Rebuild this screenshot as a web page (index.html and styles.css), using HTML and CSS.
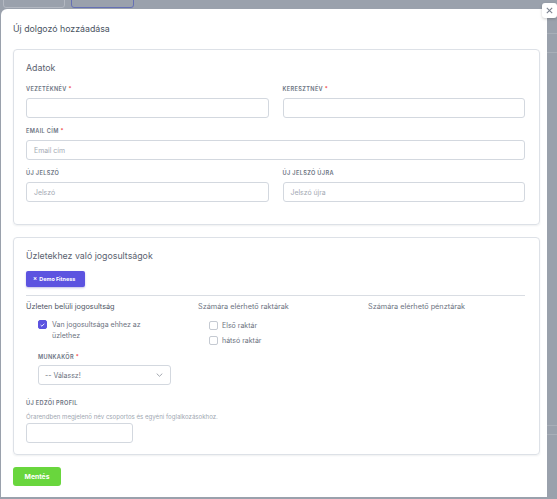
FILE: index.html
```html
<!DOCTYPE html>
<html lang="hu">
<head>
<meta charset="utf-8">
<title>Új dolgozó hozzáadása</title>
<link rel="stylesheet" href="styles.css">
</head>
<body>
<div class="topbar">
  <span class="bg-btn"></span>
  <span class="bg-btn bg-btn-blue"></span>
</div>
<div class="stage">
  <div class="modal">
    <button class="close" aria-label="Bezárás">
      <svg width="7" height="7" viewBox="0 0 7 7"><path d="M0.8 0.8 L6.2 6.2 M6.2 0.8 L0.8 6.2" stroke="#7b8290" stroke-width="1.1" fill="none"/></svg>
    </button>
    <h1 class="modal-title">Új dolgozó hozzáadása</h1>

    <section class="card card-data">
      <h2 class="card-title">Adatok</h2>
      <div class="row two">
        <div class="field">
          <label class="lbl">Vezetéknév <span class="req">*</span></label>
          <div class="input"></div>
        </div>
        <div class="field">
          <label class="lbl">Keresztnév <span class="req">*</span></label>
          <div class="input"></div>
        </div>
      </div>
      <div class="field">
        <label class="lbl">Email cím <span class="req">*</span></label>
        <div class="input"><span class="ph">Email cím</span></div>
      </div>
      <div class="row two">
        <div class="field">
          <label class="lbl">Új jelszó</label>
          <div class="input"><span class="ph">Jelszó</span></div>
        </div>
        <div class="field">
          <label class="lbl">Új jelszó újra</label>
          <div class="input"><span class="ph">Jelszó újra</span></div>
        </div>
      </div>
    </section>

    <section class="card card-perm">
      <h2 class="card-title">Üzletekhez való jogosultságok</h2>
      <div class="tag-row"><span class="tag"><span class="tag-x">×</span> Demo Fitness</span></div>
      <div class="divider"></div>
      <div class="cols">
        <div class="col">
          <div class="col-head dark">Üzleten belüli jogosultság</div>
          <div class="indent">
            <div class="check-row">
              <span class="cb checked">
                <svg width="5" height="4" viewBox="0 0 5 4"><path d="M0.6 2 L1.9 3.2 L4.4 0.7" stroke="#fff" stroke-width="0.9" fill="none"/></svg>
              </span>
              <span class="check-text">Van jogosultsága ehhez az<br>üzlethez</span>
            </div>
            <label class="lbl lbl-job">Munkakör <span class="req">*</span></label>
            <div class="select"><span class="sel-text">-- Válassz!</span>
              <svg width="7" height="4" viewBox="0 0 7 4"><path d="M0.7 0.6 L3.5 3.3 L6.3 0.6" stroke="#8a909b" stroke-width="0.8" fill="none"/></svg>
            </div>
          </div>
        </div>
        <div class="col">
          <div class="col-head">Számára elérhető raktárak</div>
          <div class="indent list">
            <div class="check-row"><span class="cb"></span><span class="check-text">Első raktár</span></div>
            <div class="check-row"><span class="cb"></span><span class="check-text">hátsó raktár</span></div>
          </div>
        </div>
        <div class="col">
          <div class="col-head">Számára elérhető pénztárak</div>
        </div>
      </div>
      <label class="lbl lbl-trainer">Új edzői profil</label>
      <div class="help">Órarendben megjelenő név csoportos és egyéni foglalkozásokhoz.</div>
      <div class="input small"></div>
    </section>

    <button class="save">Mentés</button>
  </div>
  <div class="side">
    <span class="side-line l1"></span>
    <span class="side-line l2"></span>
    <span class="side-line l3"></span>
    <span class="side-line l4"></span>
  </div>
</div>
</body>
</html>
```

FILE: styles.css
```css
* { box-sizing: border-box; }
html, body { margin: 0; padding: 0; }
body {
  width: 557px;
  height: 499px;
  overflow: hidden;
  background: #9aa1ac;
  font-family: Inter, "Noto Sans", "Liberation Sans", sans-serif;
  color: #4b5261;
}
.topbar {
  height: 9px;
  overflow: hidden;
  display: flex;
  gap: 6px;
  padding-left: 3px;
}
.bg-btn {
  display: block;
  width: 62px;
  height: 20px;
  margin-top: -12px;
  border: 1px solid #b3b8c1;
  border-radius: 3px;
}
.bg-btn-blue {
  width: 63px;
  border-color: #6570b4;
}
.stage {
  display: flex;
  height: 490px;
}
.modal {
  position: relative;
  width: 546px;
  margin-left: 1px;
  height: 488px;
  background: #fff;
  border-radius: 6px 0 0 0;
  padding: 13px 8px 0 12px;
}
.side {
  flex: 1;
  display: flex;
  flex-direction: column;
}
.side-line { display: block; height: 1px; background: #a9afb8; }
.l1 { margin-top: 24px; }
.l2 { margin-top: 18px; }
.l3 { margin-top: 372px; }
.l4 { margin-top: 8px; }
.close {
  position: absolute;
  top: -6px;
  right: -10px;
  width: 15px;
  height: 15px;
  border: none;
  padding: 0;
  background: #fff;
  border-radius: 3px;
  box-shadow: 0 1px 3px rgba(0,0,0,0.2);
  display: flex;
  align-items: center;
  justify-content: center;
}
.modal-title {
  margin: 0;
  font-size: 8.8px;
  line-height: 14px;
  font-weight: 400;
  color: #4b5563;
  height: 14px;
}
.card {
  margin: 13px 0 0 0;
  width: 527px;
  border: 1px solid #dde1e7;
  border-radius: 4px;
  box-shadow: 0 1px 2px rgba(30,40,60,0.07);
  padding: 11px 14px 0 12px;
}
.card-data { height: 176px; }
.card-perm { height: 218px; margin-top: 12px; }
.card-title {
  margin: 0;
  font-size: 8.8px;
  line-height: 14px;
  font-weight: 400;
  color: #5b6270;
}
.card-data .card-title { margin-bottom: 10px; }
.row.two {
  display: grid;
  grid-template-columns: 1fr 1fr;
  column-gap: 14px;
}
.field { margin-bottom: 9px; }
.lbl {
  display: block;
  font-size: 5.6px;
  line-height: 8px;
  font-weight: 600;
  letter-spacing: 0.35px;
  text-transform: uppercase;
  color: #6a7281;
  margin-bottom: 5px;
}
.req { color: #ef4444; }
.input {
  height: 20px;
  border: 1px solid #d3d8df;
  border-radius: 3px;
  background: #fff;
  display: flex;
  align-items: center;
  padding-left: 7px;
}
.ph {
  font-size: 6.9px;
  color: #a3a9b3;
}
.tag-row { margin-top: 8px; height: 16px; display: flex; }
.tag {
  display: flex;
  align-items: center;
  height: 16px;
  width: 59px;
  padding-left: 7px;
  background: #5c53e0;
  border-radius: 2px;
  box-shadow: 0 1px 2px rgba(60,50,180,0.3);
  color: #fff;
  font-size: 5.4px;
  line-height: 16px;
  font-weight: 700;
  white-space: pre;
}
.tag-x { font-size: 6px; margin-right: 1px; }
.divider {
  margin-top: 8px;
  height: 1px;
  background: #d9dde3;
}
.cols {
  display: grid;
  grid-template-columns: 172px 170px 1fr;
  margin-top: 6px;
}
.col-head {
  font-size: 7.3px;
  line-height: 10px;
  color: #6b7280;
}
.col-head.dark { color: #4e5563; }
.indent { padding-left: 12px; margin-top: 8px; }
.list { padding-left: 11px; margin-top: 9px; display: flex; flex-direction: column; gap: 6px; }
.check-row {
  display: flex;
  align-items: flex-start;
  gap: 5px;
}
.cb {
  flex: none;
  width: 9px;
  height: 9px;
  border: 1px solid #c5cad2;
  border-radius: 2px;
  background: #fff;
  display: flex;
  align-items: center;
  justify-content: center;
}
.cb.checked {
  background: #5c53e0;
  border-color: #5c53e0;
}
.check-text {
  font-size: 7px;
  line-height: 11px;
  color: #6b7280;
  margin-top: -1px;
}
.list .check-text { line-height: 9px; margin-top: 0; margin-left: -1px; }
.lbl-job { margin-top: 12px; margin-bottom: 4px; }
.select {
  width: 133px;
  height: 20px;
  border: 1px solid #d3d8df;
  border-radius: 3px;
  display: flex;
  align-items: center;
  justify-content: space-between;
  padding: 0 7px 0 6px;
}
.sel-text { font-size: 7px; color: #6b7280; }
.lbl-trainer { margin-top: 14px; margin-bottom: 6px; }
.help {
  font-size: 6.1px;
  line-height: 8px;
  color: #a0a7b1;
  margin-bottom: 2px;
}
.input.small { width: 107px; }
.save {
  display: block;
  margin: 12px 0 0 0;
  width: 48px;
  height: 19px;
  border: none;
  border-radius: 3px;
  background: #69d63d;
  color: #fff;
  font-family: inherit;
  font-size: 6.8px;
  font-weight: 700;
  padding: 0;
}
```
